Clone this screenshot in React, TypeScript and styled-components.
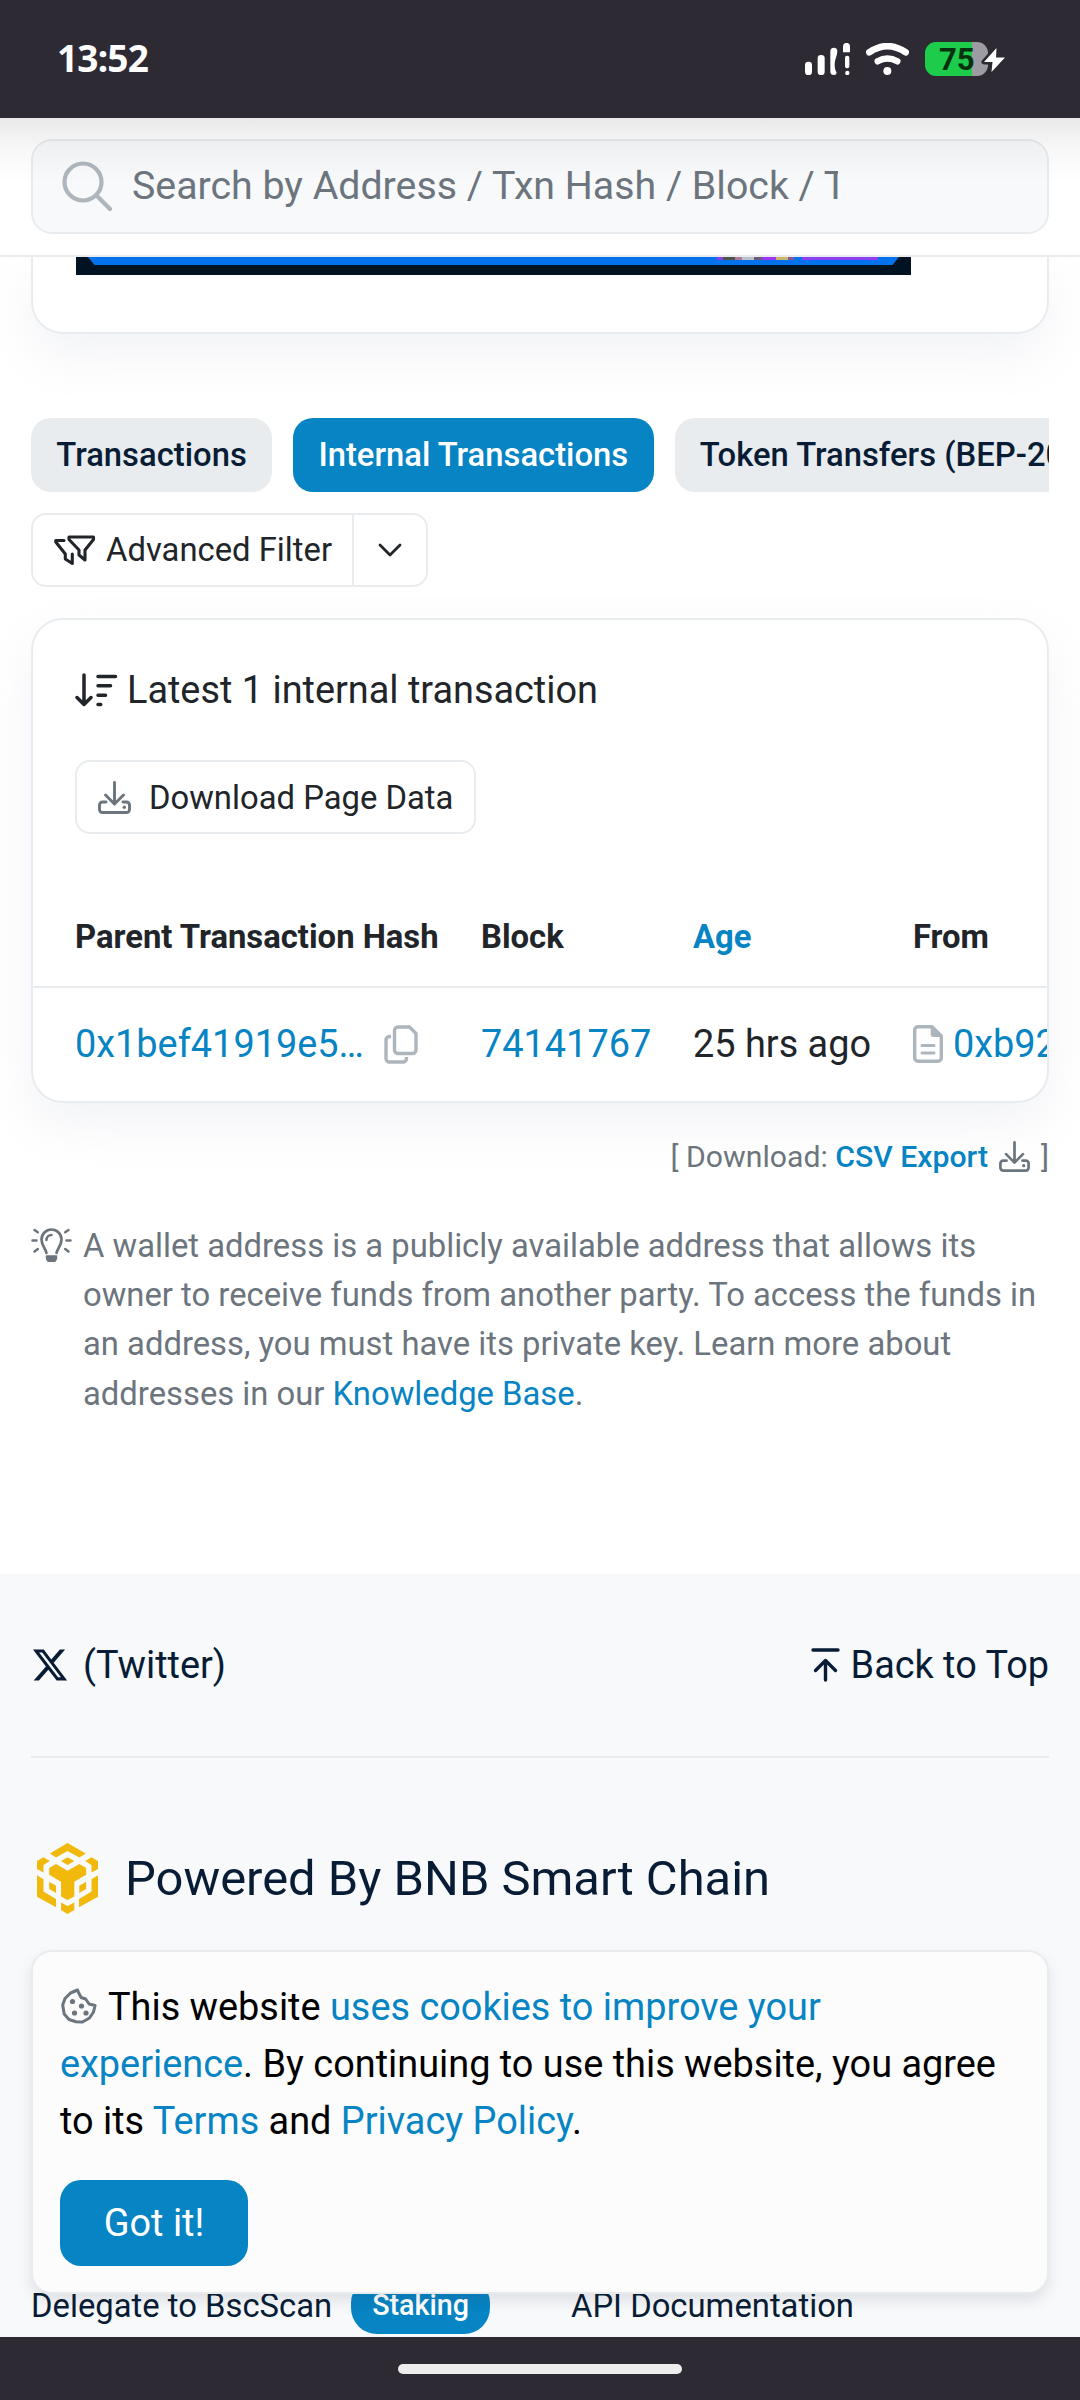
import React from "react";
import styled, { createGlobalStyle, css } from "styled-components";
import { FaXTwitter } from "react-icons/fa6";

const c = {
  chrome: "#2d2a34",
  blue: "#0784c3",
  ink: "#212529",
  navy: "#081d35",
  muted: "#6c757d",
  faint: "#adb5bd",
  line: "#e9ecef",
  soft: "#f8f9fb",
};

const Global = createGlobalStyle`
  * { box-sizing: border-box; }
  body { margin: 0; font-family: Roboto, "Liberation Sans", sans-serif; color: ${c.ink}; background: #fff; }
  svg { display: block; flex: none; }
`;

const Screen = styled.div`
  position: relative;
  width: 1080px;
  height: 2400px;
  overflow: hidden;
  display: flex;
  flex-direction: column;
  background: #fff;
  font-size: 37.87px;
`;

const StatusBar = styled.header`
  flex: none;
  height: 118px;
  background: ${c.chrome};
  color: #fff;
  display: flex;
  align-items: center;
  justify-content: space-between;
  padding: 0 75px 1px 57px;
`;
const Clock = styled.div`
  font-family: "Noto Sans", Roboto, sans-serif;
  font-weight: 700;
  font-size: 37px;
  letter-spacing: -0.8px;
  padding-bottom: 2px;
`;
const StatusIcons = styled.div`
  display: flex;
  align-items: center;
  gap: 16px;
`;
const Battery = styled.div`
  position: relative;
  width: 80px;
  height: 34px;
  display: flex;
`;
const BatteryBody = styled.div`
  width: 63px;
  height: 34px;
  border-radius: 11px;
  background: linear-gradient(90deg, #1dcc4b 0 47px, #9d9ca3 47px);
  color: #06310f;
  font-weight: 700;
  font-size: 31px;
  line-height: 35px;
  padding-left: 14px;
`;
const Bolt = styled.svg`
  position: absolute;
  left: 56px;
  top: 3px;
`;

const SearchHeader = styled.div`
  position: relative;
  z-index: 2;
  flex: none;
  height: 139px;
  border-bottom: 2px solid ${c.line};
  background: #fff;
  padding: 21px 31px 0;
`;
const TopFade = styled.div`
  position: absolute;
  inset: 0 0 auto 0;
  height: 64px;
  background: linear-gradient(rgba(0, 0, 0, 0.085), rgba(0, 0, 0, 0.03) 45%, rgba(0, 0, 0, 0));
`;
const SearchBox = styled.div`
  height: 95px;
  border: 2px solid ${c.line};
  border-radius: 21px;
  background: ${c.soft};
  display: flex;
  align-items: center;
  padding-left: 29px;
  gap: 19px;
`;
const Placeholder = styled.div`
  width: 706px;
  overflow: hidden;
  white-space: nowrap;
  color: ${c.muted};
  font-size: 39.3px;
  line-height: 57px;
  padding-bottom: 1px;
`;

const cardLook = css`
  background: #fff;
  border: 2px solid ${c.line};
  box-shadow: 0 21px 50px rgba(189, 197, 209, 0.2);
`;
const BannerCard = styled.section`
  ${cardLook}
  flex: none;
  height: 77px;
  margin: 0 31px;
  border-top: 0;
  border-radius: 0 0 32px 32px;
  padding-left: 43px;
`;
const Banner = styled.div`
  width: 835px;
  height: 18px;
  background: #001322;
  padding: 0 12px 0 12px;
`;
const BannerStrip = styled.div`
  height: 8px;
  background: #0472ec;
  clip-path: polygon(0 0, 100% 0, 99.2% 100%, 0.8% 100%);
  display: flex;
  align-items: flex-start;
  padding-left: 629px;
`;
const Fleck = styled.i<{ $w: number; $c: string }>`
  width: ${(p) => p.$w}px;
  height: 3px;
  background: ${(p) => p.$c};
`;

const Tabs = styled.nav`
  flex: none;
  margin: 84px 31px 0;
  display: flex;
  gap: 21px;
  overflow: hidden;
`;
const Tab = styled.div<{ $active?: boolean }>`
  flex: none;
  height: 74px;
  line-height: 75px;
  padding: 0 25.3px;
  border-radius: 20px;
  font-size: 32.8px;
  font-weight: 500;
  white-space: nowrap;
  background: ${(p) => (p.$active ? c.blue : c.line)};
  color: ${(p) => (p.$active ? "#fff" : c.navy)};
`;

const FilterGroup = styled.div`
  flex: none;
  align-self: flex-start;
  margin: 21px 0 0 31px;
  height: 74px;
  display: flex;
  border: 2px solid ${c.line};
  border-radius: 15px;
  background: #fff;
  font-size: 32.8px;
`;
const FilterMain = styled.div`
  width: 321px;
  display: flex;
  align-items: center;
  gap: 10px;
  padding-left: 21px;
  border-right: 2px solid ${c.line};
  white-space: nowrap;
`;
const FilterToggle = styled.div`
  width: 72px;
  display: grid;
  place-items: center;
`;

const TxCard = styled.section`
  ${cardLook}
  flex: none;
  height: 485px;
  margin: 31px 31px 0;
  border-radius: 32px;
  overflow: hidden;
  padding-top: 41px;
`;
const CardTitle = styled.div`
  display: flex;
  align-items: center;
  gap: 9px;
  height: 58px;
  padding-left: 42px;
`;
const DownloadButton = styled.div`
  display: flex;
  align-items: center;
  gap: 18px;
  width: 401px;
  height: 74px;
  margin: 41px 0 52px 42px;
  padding: 1px 0 0 21px;
  border: 2px solid ${c.line};
  border-radius: 15px;
  font-size: 32.8px;
  white-space: nowrap;
`;
const Row = styled.div<{ $head?: boolean }>`
  display: grid;
  grid-template-columns: 406px 212px 220px 300px;
  align-items: center;
  padding-left: 42px;
  white-space: nowrap;
  height: ${(p) => (p.$head ? 102 : 112)}px;
  ${(p) => p.$head && css`
    padding-top: 2px;
    font-size: 32.8px;
    font-weight: 700;
    border-bottom: 2px solid ${c.line};
  `}
`;
const Cell = styled.div<{ $link?: boolean; $gap?: number }>`
  display: flex;
  align-items: center;
  gap: ${(p) => p.$gap ?? 0}px;
  color: ${(p) => (p.$link ? c.blue : "inherit")};
`;
const Link = styled.span<{ $w?: number }>`
  color: ${c.blue};
  font-weight: ${(p) => p.$w ?? 400};
`;

const ExportLine = styled.div`
  flex: none;
  display: flex;
  justify-content: flex-end;
  align-items: center;
  gap: 11px;
  height: 45px;
  margin: 31px 31px 0;
  font-size: 30.2px;
  color: ${c.muted};
`;
const Note = styled.div`
  flex: none;
  display: flex;
  gap: 11px;
  height: 197px;
  margin: 43px 30px 0 31px;
  color: ${c.muted};
  font-size: 32.81px;
  line-height: 49.22px;
  svg { margin-top: 6px; }
`;
const NoteText = styled.p`
  margin: 0;
  white-space: nowrap;
`;

const Footer = styled.footer`
  flex: none;
  height: 763px;
  margin-top: 155px;
  padding: 62px 31px 0;
  background: ${c.soft};
  color: ${c.navy};
`;
const FooterTop = styled.div`
  display: flex;
  justify-content: space-between;
  height: 122px;
  padding-bottom: 63px;
  border-bottom: 2px solid ${c.line};
`;
const IconText = styled.div<{ $gap: number }>`
  display: flex;
  align-items: center;
  gap: ${(p) => p.$gap}px;
`;
const Powered = styled.div`
  display: flex;
  align-items: center;
  gap: 27px;
  margin: 85px 0 363px 6px;
  height: 71px;
  font-size: 48.9px;
  white-space: nowrap;
`;
const FooterLinks = styled.div`
  display: grid;
  grid-template-columns: 540px 1fr;
  align-items: center;
  height: 57px;
  font-size: 32.8px;
`;
const Pill = styled.span`
  height: 57px;
  line-height: 57px;
  padding: 0 21px;
  border-radius: 26px;
  background: ${c.blue};
  color: #fff;
  font-size: 28.7px;
  font-weight: 500;
`;

const CookiePanel = styled.aside`
  position: absolute;
  z-index: 3;
  left: 31px;
  right: 31px;
  top: 1950px;
  height: 344px;
  padding: 27px;
  border: 2px solid ${c.line};
  border-radius: 21px;
  background: #fcfcfc;
  box-shadow: 0 7px 14px rgba(30, 40, 55, 0.11);
  color: #000;
`;
const CookieText = styled.p`
  margin: 0;
  line-height: 57.1px;
  white-space: nowrap;
  svg { display: inline-block; vertical-align: -4px; margin: 0 11px 0 1px; }
`;
const GotIt = styled.div`
  width: 188px;
  height: 86px;
  margin-top: 30px;
  border-radius: 21px;
  background: ${c.blue};
  color: #fff;
  line-height: 87px;
  text-align: center;
`;

const NavBar = styled.div`
  flex: none;
  height: 63px;
  background: ${c.chrome};
  padding-top: 27px;
`;
const Handle = styled.div`
  width: 284px;
  height: 10px;
  margin: 0 auto;
  border-radius: 5px;
  background: #ededed;
`;

const Signal = () => (
  <svg width="45" height="32" viewBox="75 69 135 96" fill="#fff">
    <rect x="75" y="125" width="21" height="40" rx="10" />
    <rect x="113" y="105" width="21" height="60" rx="10" />
    <path d="M151 94a10 10 0 0 1 21 0c0 14-8 24-8 38s2 20 6 26a8 8 0 0 1-8 7c-7 0-11-4-11-10z" />
    <path d="M189 97V79a10.500 10.500 0 0 1 21 0v18z" />
    <rect x="195" y="107" width="13" height="38" rx="6" />
    <circle cx="202" cy="159" r="6.500" />
  </svg>
);
const Wifi = () => (
  <svg width="43" height="32" viewBox="258 69 129 96" fill="none" stroke="#fff" strokeLinecap="round">
    <path d="M268 97Q322 60 377 97" strokeWidth="20" />
    <path d="M293 124Q322 107 352 124" strokeWidth="19" />
    <circle cx="322" cy="153" r="12" fill="#fff" stroke="none" />
  </svg>
);
const Magnifier = () => (
  <svg width="51" height="51" viewBox="0 0 51 51" fill="none" stroke={c.faint} strokeWidth="4.200" strokeLinecap="round">
    <circle cx="21" cy="21" r="18.500" />
    <path d="M34.500 34.500 48 48" />
  </svg>
);
const Filters = () => (
  <svg width="42" height="30" viewBox="0 0 42 30" fill="none" stroke={c.ink} strokeWidth="3.100" strokeLinecap="round" strokeLinejoin="round">
    <path d="M15 2h24.500v2.500L31 15v10l-6-5v-5L15 4.500z" />
    <path d="M10 5.500H1.800v1.500l9.500 12v5l7 4.500V19" />
  </svg>
);
const Chevron = () => (
  <svg width="24" height="14" viewBox="0 0 24 14" fill="none" stroke={c.ink} strokeWidth="2.800" strokeLinecap="round" strokeLinejoin="round">
    <path d="m2 2 10 10L22 2" />
  </svg>
);
const SortDown = () => (
  <svg width="43" height="34" viewBox="0 0 43 34" fill="none" stroke={c.ink} strokeWidth="3.500" strokeLinecap="round" strokeLinejoin="round">
    <path d="M9 2v29M2 24.500 9 31.500l7-7M23 3.500h17.500M23 12.800h12.500M23 22.200h7.500M23 31.500h2.800" />
  </svg>
);
const Download = ({ size }: { size: number }) => (
  <svg width={size} height={size} viewBox="0 0 33 33" fill="none" stroke={c.muted} strokeWidth="2.900" strokeLinecap="round" strokeLinejoin="round">
    <path d="M16.500 1.500v21M7.500 14l9 9 9-9" />
    <path d="M8 21H4.500A3 3 0 0 0 1.500 24v4.500a3 3 0 0 0 3 3h24a3 3 0 0 0 3-3V24a3 3 0 0 0-3-3H25" />
    <circle cx="26.300" cy="26.300" r="1.700" fill={c.muted} stroke="none" />
  </svg>
);
const Copy = () => (
  <svg width="34" height="39" viewBox="0 0 34 39" fill="none" stroke={c.faint} strokeWidth="3.400" strokeLinecap="round" strokeLinejoin="round">
    <path d="M14 2h11.500L32 8.500V25a3.500 3.500 0 0 1-3.500 3.500H14a3.500 3.500 0 0 1-3.500-3.500V5.500A3.500 3.500 0 0 1 14 2z" />
    <path d="M7 11.500H5.500A3.500 3.500 0 0 0 2 15v18.500A3.500 3.500 0 0 0 5.500 37H19a3.500 3.500 0 0 0 3.500-3.500V32" strokeLinecap="butt" />
  </svg>
);
const Doc = () => (
  <svg width="30" height="38" viewBox="0 0 30 38" fill="none" stroke={c.faint} strokeWidth="3.400" strokeLinecap="round" strokeLinejoin="round">
    <path d="M5 1.700h14L28.300 11v22a3.300 3.300 0 0 1-3.300 3.300H5A3.300 3.300 0 0 1 1.700 33V5A3.300 3.300 0 0 1 5 1.700z" />
    <path d="M18.500 2v7.300a2 2 0 0 0 2 2H28z" fill={c.faint} strokeWidth="1.500" />
    <path d="M9 20.500h12M9 28h12" strokeWidth="3" />
  </svg>
);
const Bulb = () => (
  <svg width="41" height="34" viewBox="0 0 41 34" fill="none" stroke={c.muted} strokeWidth="2.700" strokeLinecap="round" strokeLinejoin="round">
    <path d="M15.500 25c-.5-4-5-7-5-13.500a10 10 0 0 1 20 0c0 6.500-4.500 9.500-5 13.500" />
    <path d="M15.500 28h10v1.500a5 5 0 0 1-10 0z" fill={c.muted} strokeWidth="1.500" />
    <path d="M15.500 12a5 5 0 0 1 5-5M1.500 12.500h4M35.500 12.500h4M3.500 2l3.300 2.200M37.500 2l-3.300 2.200M3.500 23.500 6.800 21M37.500 23.500 34.200 21" strokeWidth="2.500" />
  </svg>
);
const ToTop = () => (
  <svg width="29" height="34" viewBox="0 0 29 34" fill="none" stroke={c.navy} strokeWidth="3.400" strokeLinecap="round" strokeLinejoin="round">
    <path d="M2 2h25M14.500 32V13M4.500 22.500l10-10 10 10" />
  </svg>
);
const Cookie = () => (
  <svg width="36" height="36" viewBox="0 0 36 36" fill="none" stroke={c.muted} strokeWidth="3" strokeLinejoin="round">
    <path d="M16.500 2 9.500 5 4 10.500 1.700 17l1.500 9L8 31.500l7 2.200 6.500.3 7-4 4-6 1.600-6.500-6-1.500-3.500-5-4.500-1.500-2.600-5z" />
    <g fill={c.muted} stroke="none">
      <circle cx="11.500" cy="13.500" r="2.600" />
      <circle cx="20.500" cy="18" r="2.600" />
      <circle cx="13.500" cy="25" r="2.600" />
      <circle cx="25" cy="25" r="2.600" />
    </g>
  </svg>
);
const BnbLogo = () => (
  <svg width="61" height="71" viewBox="104 68 170 214" preserveAspectRatio="none" fill="#f0b90b">
    <path d="M140 100 189 68l51 32-18 12-33-20-32 20zM104 122l18-11 18 11-18 12v23l-18-11zM274 122l-18-11-18 11 18 12v23l18-11zM104 165l18 12v37l35 23v25l-53-32zM274 165l-18 12v37l-35 23v25l53-32zM138 185l19 12v22l-19-12zM241 185l-19 12v22l19-12zM171 247l18 11 19-11v23l-19 12-18-12zM171 122l18-11 19 11-19 12z" />
    <path d="m138 143 19-12 32 21 33-21 19 12v21l-33 21v44l-19 11-18-11v-44l-33-21z" />
  </svg>
);

export default function App() {
  return (
    <Screen>
      <Global />
      <StatusBar>
        <Clock>13:52</Clock>
        <StatusIcons>
          <Signal />
          <Wifi />
          <Battery>
            <BatteryBody>75</BatteryBody>
            <Bolt width="28" height="29" viewBox="-3 -3 28 29">
              <path d="M12.500 0 0 14h8.500L7.500 24 21 9.500h-9z" fill="#fff" stroke={c.chrome} strokeWidth="5" strokeLinejoin="round" paintOrder="stroke" />
            </Bolt>
          </Battery>
        </StatusIcons>
      </StatusBar>

      <SearchHeader>
        <SearchBox>
          <Magnifier />
          <Placeholder>Search by Address / Txn Hash / Block / Token</Placeholder>
        </SearchBox>
        <TopFade />
      </SearchHeader>

      <BannerCard>
        <Banner>
          <BannerStrip>
            <Fleck $w={6} $c="#8a3ff0" />
            <Fleck $w={12} $c="#4d5548" />
            <Fleck $w={7} $c="#b07a9c" />
            <Fleck $w={12} $c="#b8c2c9" />
            <Fleck $w={8} $c="#6b5a78" />
            <Fleck $w={14} $c="#a135f5" />
            <Fleck $w={12} $c="#c9b76a" />
            <Fleck $w={6} $c="#7d5aa0" />
            <Fleck $w={8} $c="#0472ec" />
            <Fleck $w={76} $c="#8d3ff2" />
          </BannerStrip>
        </Banner>
      </BannerCard>

      <Tabs>
        <Tab>Transactions</Tab>
        <Tab $active>Internal Transactions</Tab>
        <Tab>Token Transfers (BEP-20)</Tab>
      </Tabs>
      <FilterGroup>
        <FilterMain>
          <Filters />
          Advanced Filter
        </FilterMain>
        <FilterToggle>
          <Chevron />
        </FilterToggle>
      </FilterGroup>

      <TxCard>
        <CardTitle>
          <SortDown />
          Latest 1 internal transaction
        </CardTitle>
        <DownloadButton>
          <Download size={33} />
          Download Page Data
        </DownloadButton>
        <Row $head>
          <Cell>Parent Transaction Hash</Cell>
          <Cell>Block</Cell>
          <Cell $link>Age</Cell>
          <Cell>From</Cell>
        </Row>
        <Row>
          <Cell $link $gap={20}>
            0x1bef41919e5…
            <Copy />
          </Cell>
          <Cell $link>74141767</Cell>
          <Cell>25 hrs ago</Cell>
          <Cell $link $gap={10}>
            <Doc />
            0xb92
          </Cell>
        </Row>
      </TxCard>

      <ExportLine>
        <span>
          [ Download: <Link $w={500}>CSV Export</Link>
        </span>
        <Download size={31} />
        <span>]</span>
      </ExportLine>

      <Note>
        <Bulb />
        <NoteText>
          A wallet address is a publicly available address that allows its
          <br />
          owner to receive funds from another party. To access the funds in
          <br />
          an address, you must have its private key. Learn more about
          <br />
          addresses in our <Link>Knowledge Base</Link>.
        </NoteText>
      </Note>

      <Footer>
        <FooterTop>
          <IconText $gap={14}>
            <FaXTwitter size={38} />
            (Twitter)
          </IconText>
          <IconText $gap={11}>
            <ToTop />
            Back to Top
          </IconText>
        </FooterTop>
        <Powered>
          <BnbLogo />
          Powered By BNB Smart Chain
        </Powered>
        <FooterLinks>
          <IconText $gap={19}>
            Delegate to BscScan
            <Pill>Staking</Pill>
          </IconText>
          <span>API Documentation</span>
        </FooterLinks>
      </Footer>

      <NavBar>
        <Handle />
      </NavBar>

      <CookiePanel>
        <CookieText>
          <Cookie />
          This website <Link>uses cookies to improve your</Link>
          <br />
          <Link>experience</Link>. By continuing to use this website, you agree
          <br />
          to its <Link>Terms</Link> and <Link>Privacy Policy</Link>.
        </CookieText>
        <GotIt>Got it!</GotIt>
      </CookiePanel>
    </Screen>
  );
}
